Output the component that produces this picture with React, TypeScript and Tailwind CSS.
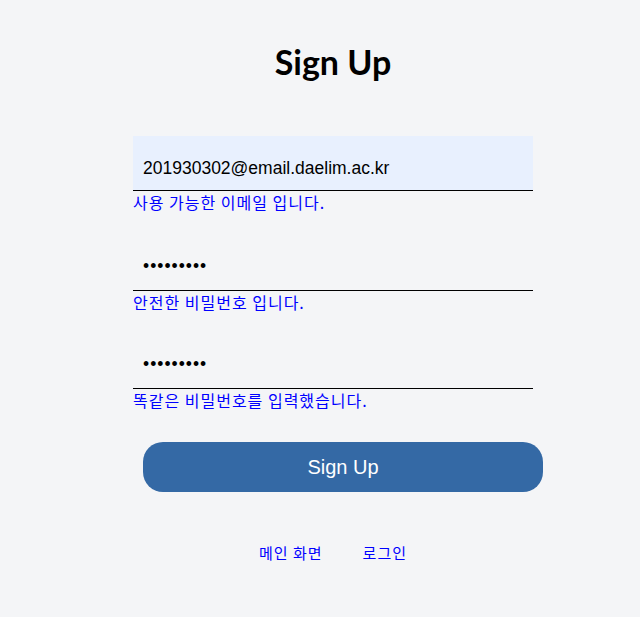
import React from "react";

export default function App() {
  const kr = { fontFamily: '"Noto Sans CJK KR", "Noto Sans", sans-serif' };
  return (
    <div className="min-h-[617px] w-full bg-[#f4f5f7]" style={{ fontFamily: '"Liberation Sans", Arial, sans-serif' }}>
      <div className="ml-[133px] flex w-[400px] flex-col pt-[40px]">
        <h1 className="text-center text-[34px] font-bold leading-[44px] text-black" style={{ fontFamily: 'Lato, "Noto Sans", sans-serif' }}>
          Sign Up
        </h1>

        <div className="mt-[52px] flex flex-col">
          <input
            readOnly
            value="201930302@email.daelim.ac.kr"
            className="h-[55px] w-[400px] border-b border-black bg-[#e8f0fe] pl-[10px] pt-[10px] text-[17.5px] text-black outline-none"
          />
          <span className="text-[16px] leading-[22px] tracking-[1px] text-[#0000ff]" style={kr}>사용 가능한 이메일 입니다.</span>
        </div>

        <div className="mt-[23px] flex flex-col">
          <input
            readOnly
            type="password"
            value="123456789"
            className="h-[55px] w-[400px] border-b border-black bg-transparent pl-[10px] pt-[6px] text-[17.5px] tracking-[1px] text-black outline-none"
          />
          <span className="text-[16px] leading-[22px] tracking-[1px] text-[#0000ff]" style={kr}>안전한 비밀번호 입니다.</span>
        </div>

        <div className="mt-[21px] flex flex-col">
          <input
            readOnly
            type="password"
            value="123456789"
            className="h-[55px] w-[400px] border-b border-black bg-transparent pl-[10px] pt-[6px] text-[17.5px] tracking-[1px] text-black outline-none"
          />
          <span className="text-[16px] leading-[22px] tracking-[1px] text-[#0000ff]" style={kr}>똑같은 비밀번호를 입력했습니다.</span>
        </div>

        <button className="ml-[10px] mt-[31px] flex h-[50px] w-[400px] items-center justify-center rounded-[20px] bg-[#3469a5] text-[20px] text-white">
          Sign Up
        </button>

        <div className="mt-[50px] flex justify-center gap-[40px] text-[15px] tracking-[1px] text-[#0000ff]" style={kr}>
          <a href="#">메인 화면</a>
          <a href="#">로그인</a>
        </div>
      </div>
    </div>
  );
}
